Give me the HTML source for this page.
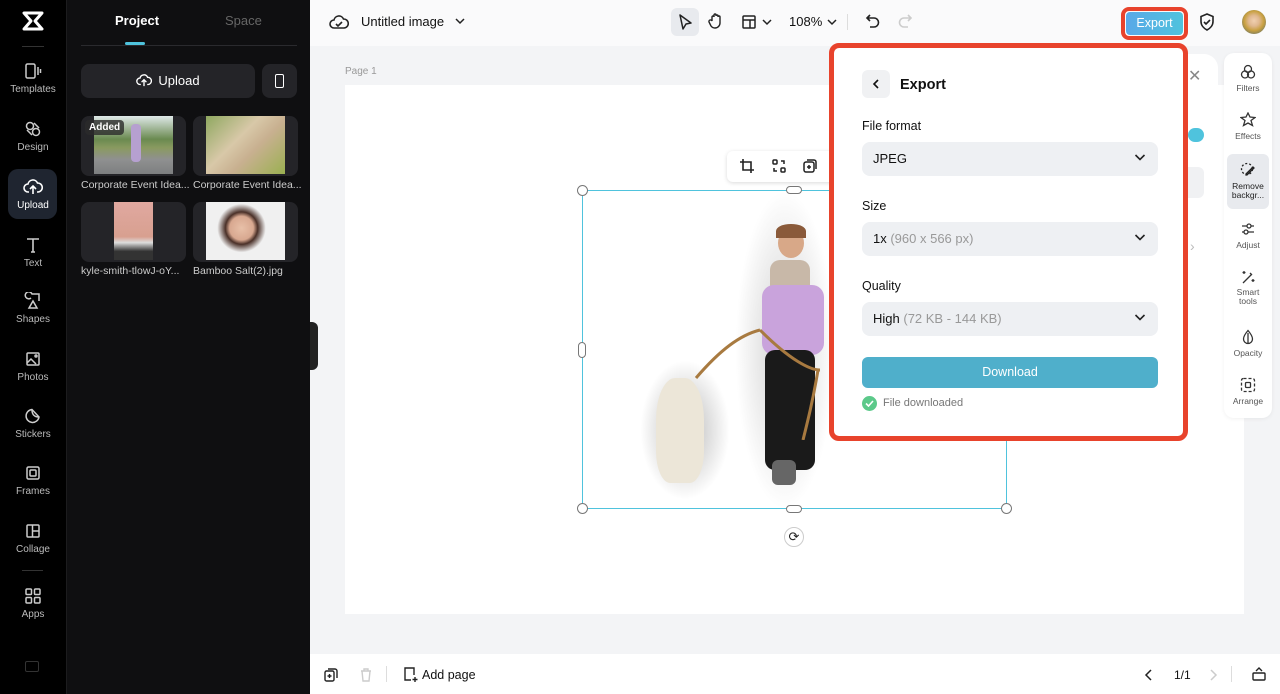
<!DOCTYPE html>
<html><head><meta charset="utf-8"><style>
*{box-sizing:border-box;margin:0;padding:0}
body{width:1280px;height:694px;overflow:hidden;font-family:"Liberation Sans",sans-serif;background:#f3f4f6;position:relative}
.abs{position:absolute}
.rail{left:0;top:0;width:66px;height:694px;background:#000}
.ri{position:absolute;left:0;width:66px;text-align:center;color:#bbb;font-size:10px}
.ri svg{display:block;margin:0 auto 4px}
.panel{left:66px;top:0;width:244px;height:694px;background:#0f0f11;border-left:1px solid #1c1c1e}
.thumb{position:absolute;width:105px;height:60px;background:#242428;border-radius:8px;overflow:hidden}
.cap{position:absolute;color:#ccc;font-size:10.5px;white-space:nowrap}
.top{left:310px;top:0;width:970px;height:46px;background:#fafafb}
.bot{left:310px;top:654px;width:970px;height:40px;background:#fff}
.sel{border-radius:8px;background:#eef0f3;height:34px;left:28px;width:296px;font-size:13px;color:#111;padding:9px 11px}
.sel .ch{position:absolute;right:12px;top:10px}
.lbl{font-size:12.5px;color:#111;left:28px}
</style></head><body>
<div class="abs rail">
<svg class="abs" style="left:21px;top:11px" width="24" height="20" viewBox="0 0 24 20"><path d="M3 2h18l-7 8 7 8H3l7-8z" fill="none" stroke="#fff" stroke-width="3" stroke-linejoin="round"/></svg>
<div class="abs" style="left:22px;top:46px;width:22px;height:1px;background:#333"></div>
<div class="ri" style="top:62px"><svg width="18" height="18" viewBox="0 0 18 18" fill="none" stroke="#ccc" stroke-width="1.5"><rect x="2" y="2" width="9" height="14" rx="1.5"/><path d="M14 5v8M16.5 7v4"/></svg>Templates</div>
<div class="ri" style="top:120px"><svg width="18" height="18" viewBox="0 0 18 18" fill="none" stroke="#ccc" stroke-width="1.5"><circle cx="6" cy="6" r="3.5"/><circle cx="12" cy="12" r="3.5"/><path d="M10 3l5 5M3 10l5 5"/></svg>Design</div>
<div class="abs" style="left:8px;top:169px;width:49px;height:50px;background:#1f2530;border-radius:10px"></div>
<div class="ri" style="top:178px;color:#fff"><svg width="20" height="18" viewBox="0 0 20 18" fill="none" stroke="#fff" stroke-width="1.6"><path d="M6 14H5a4 4 0 010-8 5 5 0 019.5-1A4 4 0 0115 14h-1M10 16V9M7 11l3-3 3 3"/></svg>Upload</div>
<div class="ri" style="top:236px"><svg width="18" height="18" viewBox="0 0 18 18" fill="none" stroke="#ccc" stroke-width="1.6"><path d="M3 3h12M9 3v13M7 16h4"/></svg>Text</div>
<div class="ri" style="top:292px"><svg width="18" height="18" viewBox="0 0 18 18" fill="none" stroke="#ccc" stroke-width="1.5"><path d="M7 6A3.5 3.5 0 118 2h7v7M9 9l-4 7h8z"/></svg>Shapes</div>
<div class="ri" style="top:350px"><svg width="18" height="18" viewBox="0 0 18 18" fill="none" stroke="#ccc" stroke-width="1.5"><rect x="3" y="3" width="12" height="12" rx="1"/><path d="M3 13l4-4 5 5"/><circle cx="12" cy="6" r="1"/></svg>Photos</div>
<div class="ri" style="top:407px"><svg width="18" height="18" viewBox="0 0 18 18" fill="none" stroke="#ccc" stroke-width="1.5"><path d="M15 10A6.5 6.5 0 118 2.5L15 10zM8 3c0 4 2 7 7 7"/></svg>Stickers</div>
<div class="ri" style="top:464px"><svg width="18" height="18" viewBox="0 0 18 18" fill="none" stroke="#ccc" stroke-width="1.5"><rect x="3" y="3" width="12" height="12" rx="1.5"/><rect x="6" y="6" width="6" height="6" rx="1"/></svg>Frames</div>
<div class="ri" style="top:522px"><svg width="18" height="18" viewBox="0 0 18 18" fill="none" stroke="#ccc" stroke-width="1.5"><rect x="3" y="3" width="12" height="12" rx="1"/><path d="M8.5 3v12M8.5 9H15"/></svg>Collage</div>
<div class="abs" style="left:22px;top:570px;width:21px;height:1px;background:#333"></div>
<div class="ri" style="top:587px"><svg width="18" height="18" viewBox="0 0 18 18" fill="none" stroke="#ccc" stroke-width="1.5"><rect x="2" y="2" width="5.5" height="5.5" rx="1"/><rect x="10.5" y="2" width="5.5" height="5.5" rx="1"/><rect x="2" y="10.5" width="5.5" height="5.5" rx="1"/><rect x="10.5" y="10.5" width="5.5" height="5.5" rx="1"/></svg>Apps</div>
<div class="abs" style="left:25px;top:661px;width:14px;height:11px;border:1px solid #333;border-radius:2px"></div>
</div>
<div class="abs panel">
<div class="abs" style="left:48px;top:13px;color:#fff;font-weight:bold;font-size:13px">Project</div>
<div class="abs" style="left:158px;top:13px;color:#666;font-size:13px">Space</div>
<div class="abs" style="left:14px;top:45px;width:216px;height:1px;background:#2a2a2e"></div>
<div class="abs" style="left:58px;top:42px;width:20px;height:3px;background:#4fc3dd;border-radius:2px"></div>
<div class="abs" style="left:14px;top:64px;width:174px;height:34px;background:#242428;border-radius:8px;color:#fff;font-size:13px;text-align:center;line-height:34px"><svg style="vertical-align:-3px;margin-right:6px" width="16" height="15" viewBox="0 0 20 18" fill="none" stroke="#fff" stroke-width="1.7"><path d="M6 14H5a4 4 0 010-8 5 5 0 019.5-1A4 4 0 0115 14h-1M10 16V9M7 11l3-3 3 3"/></svg>Upload</div>
<div class="abs" style="left:195px;top:64px;width:35px;height:34px;background:#242428;border-radius:8px"><div class="abs" style="left:13px;top:10px;width:9px;height:14px;border:1.5px solid #fff;border-radius:2px"></div></div>
<div class="thumb" style="left:14px;top:116px"><div class="abs" style="left:13px;top:0;width:79px;height:58px;background:linear-gradient(#dfe8e8 0,#6a8a50 40%,#8a9a60 55%,#8f9090 75%,#7d7f80)"></div><div class="abs" style="left:50px;top:8px;width:10px;height:38px;background:#b6a0d0;border-radius:4px"></div><div class="abs" style="left:4px;top:4px;background:#2a2a2acc;color:#fff;font-size:10px;padding:2px 4px;border-radius:4px;font-weight:bold">Added</div></div>
<div class="thumb" style="left:126px;top:116px"><div class="abs" style="left:13px;top:0;width:79px;height:58px;background:linear-gradient(135deg,#8fa860,#d8c8a8 40%,#c8b090 60%,#9ab050)"></div></div>
<div class="cap" style="left:14px;top:179px">Corporate Event Idea...</div>
<div class="cap" style="left:126px;top:179px">Corporate Event Idea...</div>
<div class="thumb" style="left:14px;top:202px"><div class="abs" style="left:33px;top:0;width:39px;height:58px;background:linear-gradient(#e0a8a0,#d8a090 60%,#ddd 70%,#333 85%)"></div></div>
<div class="thumb" style="left:126px;top:202px"><div class="abs" style="left:13px;top:0;width:79px;height:58px;background:radial-gradient(circle at 45% 45%,#e8c0a8 0,#d8a890 22%,#4a3028 30%,#f0f0f0 45%)"></div></div>
<div class="cap" style="left:14px;top:265px">kyle-smith-tlowJ-oY...</div>
<div class="cap" style="left:126px;top:265px">Bamboo Salt(2).jpg</div>
</div>
<div class="abs" style="left:310px;top:322px;width:8px;height:48px;background:#222;border-radius:0 6px 6px 0"></div>
<div class="abs top">
<svg class="abs" style="left:19px;top:13px" width="20" height="18" viewBox="0 0 20 18" fill="none" stroke="#222" stroke-width="1.6"><path d="M5 15a4 4 0 010-8 5 5 0 019.5-1A4.5 4.5 0 0115 15z"/><path d="M7 11l2 2 4-4"/></svg>
<div class="abs" style="left:51px;top:14px;font-size:13px;color:#111">Untitled image</div>
<svg class="abs" style="left:145px;top:17px" width="10" height="8" viewBox="0 0 10 8"><path d="M1 2l4 4 4-4" fill="none" stroke="#222" stroke-width="1.5"/></svg>
<div class="abs" style="left:361px;top:8px;width:28px;height:28px;background:#e8eaee;border-radius:6px"></div>
<svg class="abs" style="left:367px;top:13px" width="16" height="18" viewBox="0 0 16 18"><path d="M3 2l11 8-5 1-3 5z" fill="none" stroke="#222" stroke-width="1.5" stroke-linejoin="round"/></svg>
<svg class="abs" style="left:398px;top:12px" width="16" height="18" viewBox="0 0 16 18" fill="none" stroke="#222" stroke-width="1.4"><path d="M4 9V5a1 1 0 012 0V3a1 1 0 012 0v1a1 1 0 012 0v1a1 1 0 012 0v6a5 5 0 01-5 5 5 5 0 01-4-2L1 10a1 1 0 013-1z"/></svg>
<svg class="abs" style="left:431px;top:14px" width="16" height="16" viewBox="0 0 16 16" fill="none" stroke="#222" stroke-width="1.5"><rect x="2" y="2" width="12" height="12" rx="1"/><path d="M2 6h12M9 6v8"/></svg>
<svg class="abs" style="left:452px;top:18px" width="10" height="8" viewBox="0 0 10 8"><path d="M1 2l4 4 4-4" fill="none" stroke="#222" stroke-width="1.5"/></svg>
<div class="abs" style="left:479px;top:14px;font-size:13px;color:#111">108%</div>
<svg class="abs" style="left:517px;top:18px" width="10" height="8" viewBox="0 0 10 8"><path d="M1 2l4 4 4-4" fill="none" stroke="#222" stroke-width="1.5"/></svg>
<div class="abs" style="left:537px;top:14px;width:1px;height:16px;background:#ddd"></div>
<svg class="abs" style="left:555px;top:13px" width="16" height="16" viewBox="0 0 16 16" fill="none" stroke="#222" stroke-width="1.6"><path d="M5 2L2 5l3 3M2 5h7a4.5 4.5 0 010 9H5"/></svg>
<svg class="abs" style="left:587px;top:13px" width="16" height="16" viewBox="0 0 16 16" fill="none" stroke="#ccc" stroke-width="1.6"><path d="M11 2l3 3-3 3M14 5H7a4.5 4.5 0 000 9h4"/></svg>
<div class="abs" style="left:811px;top:7px;width:67px;height:33px;border:4px solid #e8432c;border-radius:8px"></div>
<div class="abs" style="left:816px;top:12px;width:57px;height:23px;background:linear-gradient(90deg,#5aa8e8,#4fc3dd);border-radius:4px;color:#fff;font-size:12.5px;text-align:center;line-height:23px">Export</div>
<svg class="abs" style="left:888px;top:12px" width="18" height="20" viewBox="0 0 18 20" fill="none" stroke="#222" stroke-width="1.6"><path d="M9 2l6 2.5v5c0 4-3 7-6 8.5-3-1.5-6-4.5-6-8.5v-5z"/><path d="M6 10l2 2 4-4"/></svg>
<div class="abs" style="left:932px;top:10px;width:24px;height:24px;border-radius:50%;background:radial-gradient(circle at 50% 45%,#f0d0b0 0,#e0b890 30%,#c8a040 55%,#3a6080)"></div>
</div>
<div class="abs" style="left:345px;top:66px;font-size:10px;color:#999">Page 1</div>
<div class="abs" style="left:345px;top:85px;width:899px;height:529px;background:#fff"></div>
<div class="abs" style="left:640px;top:360px;width:90px;height:140px;border-radius:45%;background:radial-gradient(ellipse,#ccc 20%,#fff 70%)"></div>
<div class="abs" style="left:735px;top:190px;width:100px;height:320px;border-radius:45%;background:radial-gradient(ellipse,#ddd 20%,#fff 70%)"></div>
<div class="abs" style="left:656px;top:378px;width:48px;height:105px;border-radius:40% 40% 30% 30%;background:#ece6d8"></div>
<div class="abs" style="left:778px;top:228px;width:26px;height:30px;border-radius:50%;background:#d8a888"></div>
<div class="abs" style="left:776px;top:224px;width:30px;height:14px;border-radius:50% 50% 0 0;background:#8a5a3a"></div>
<div class="abs" style="left:770px;top:260px;width:40px;height:35px;border-radius:10px;background:#c8b8a8"></div>
<div class="abs" style="left:762px;top:285px;width:62px;height:70px;border-radius:12px;background:#c9a3dc"></div>
<div class="abs" style="left:765px;top:350px;width:50px;height:120px;border-radius:10px;background:#1a1a1a"></div>
<div class="abs" style="left:772px;top:460px;width:24px;height:25px;border-radius:6px;background:#666"></div>
<svg class="abs" style="left:690px;top:310px" width="140" height="130"><path d="M6 68C30 40 50 25 70 20M70 20c30 30 50 40 60 40M128 60c-5 30-10 50-15 70" fill="none" stroke="#a87a40" stroke-width="3"/></svg>
<div class="abs" style="left:582px;top:190px;width:425px;height:319px;border:1.5px solid #4fc3dd"></div>
<div class="abs" style="left:577px;top:185px;width:11px;height:11px;border-radius:50%;background:#fff;border:1px solid #777"></div>
<div class="abs" style="left:577px;top:503px;width:11px;height:11px;border-radius:50%;background:#fff;border:1px solid #777"></div>
<div class="abs" style="left:1001px;top:503px;width:11px;height:11px;border-radius:50%;background:#fff;border:1px solid #777"></div>
<div class="abs" style="left:786px;top:186px;width:16px;height:8px;border-radius:4px;background:#fff;border:1px solid #777"></div>
<div class="abs" style="left:786px;top:505px;width:16px;height:8px;border-radius:4px;background:#fff;border:1px solid #777"></div>
<div class="abs" style="left:578px;top:342px;width:8px;height:16px;border-radius:4px;background:#fff;border:1px solid #777"></div>
<div class="abs" style="left:784px;top:527px;width:20px;height:20px;border-radius:50%;background:#fff;border:1px solid #ccc;text-align:center;font-size:13px;line-height:18px;color:#222">⟳</div>
<div class="abs" style="left:727px;top:151px;width:110px;height:31px;background:#fff;border-radius:6px;box-shadow:0 1px 4px rgba(0,0,0,.15)">
<svg class="abs" style="left:12px;top:7px" width="16" height="16" viewBox="0 0 16 16" fill="none" stroke="#222" stroke-width="1.6"><path d="M4 1v11h11M1 4h11v11"/></svg>
<svg class="abs" style="left:44px;top:7px" width="16" height="16" viewBox="0 0 16 16" fill="none" stroke="#222" stroke-width="1.5"><rect x="2" y="2" width="4" height="4" rx="1"/><rect x="10" y="10" width="4" height="4" rx="1"/><path d="M10 3h3v3M6 13H3v-3"/></svg>
<svg class="abs" style="left:75px;top:7px" width="16" height="16" viewBox="0 0 16 16" fill="none" stroke="#222" stroke-width="1.5"><rect x="2" y="4" width="10" height="10" rx="2"/><path d="M5 2h7a2 2 0 012 2v7M7 7v4M5 9h4"/></svg>
</div>
<div class="abs" style="left:1170px;top:54px;width:48px;height:228px;background:#fff;border-radius:0 14px 14px 0"></div>
<div class="abs" style="left:1188px;top:66px;font-size:16px;color:#888">✕</div>
<div class="abs" style="left:1188px;top:128px;width:16px;height:14px;border-radius:7px;background:#4fc3dd"></div>
<div class="abs" style="left:1180px;top:167px;width:24px;height:31px;background:#f0f1f3;border-radius:6px"></div>
<div class="abs" style="left:1190px;top:238px;color:#bbb;font-size:14px">›</div>
<div class="abs" style="left:1224px;top:53px;width:48px;height:365px;background:#fff;border-radius:10px;box-shadow:0 1px 4px rgba(0,0,0,.06)"></div>
<div class="abs" style="left:1227px;top:154px;width:42px;height:55px;background:#e8eaee;border-radius:6px"></div>
<div class="abs" style="left:1224px;top:64px;width:48px;text-align:center;font-size:8.5px;color:#555">
<svg width="16" height="16" viewBox="0 0 16 16" fill="none" stroke="#333" stroke-width="1.3" style="display:block;margin:0 auto 3px"><circle cx="8" cy="5" r="3.5"/><circle cx="5" cy="10.5" r="3.5"/><circle cx="11" cy="10.5" r="3.5"/></svg>Filters</div>
<div class="abs" style="left:1224px;top:112px;width:48px;text-align:center;font-size:8.5px;color:#555">
<svg width="16" height="16" viewBox="0 0 16 16" fill="none" stroke="#333" stroke-width="1.3" style="display:block;margin:0 auto 3px"><path d="M8 1l2 4 5 .5-4 3 1.5 5L8 11l-4.5 2.5L5 8.5l-4-3L6 5z"/></svg>Effects</div>
<div class="abs" style="left:1224px;top:162px;width:48px;text-align:center;font-size:8.5px;color:#222;line-height:9px">
<svg width="16" height="16" viewBox="0 0 16 16" fill="none" stroke="#222" stroke-width="1.3" style="display:block;margin:0 auto 4px"><circle cx="7" cy="7" r="5.5" stroke-dasharray="2 2"/><path d="M6 12l7-7 1 1-7 7H6z"/></svg>Remove<br>backgr...</div>
<div class="abs" style="left:1224px;top:221px;width:48px;text-align:center;font-size:8.5px;color:#555">
<svg width="16" height="16" viewBox="0 0 16 16" fill="none" stroke="#333" stroke-width="1.3" style="display:block;margin:0 auto 3px"><path d="M2 5h12M2 11h12"/><circle cx="9" cy="5" r="2" fill="#fff"/><circle cx="6" cy="11" r="2" fill="#fff"/></svg>Adjust</div>
<div class="abs" style="left:1224px;top:269px;width:48px;text-align:center;font-size:8.5px;color:#555;line-height:9px">
<svg width="16" height="16" viewBox="0 0 16 16" fill="none" stroke="#333" stroke-width="1.3" style="display:block;margin:0 auto 3px"><path d="M3 14L12 5M10 4l2 2M4 2v3M2.5 3.5h3M13 10v3M11.5 11.5h3"/></svg>Smart<br>tools</div>
<div class="abs" style="left:1224px;top:329px;width:48px;text-align:center;font-size:8.5px;color:#555">
<svg width="16" height="16" viewBox="0 0 16 16" fill="none" stroke="#333" stroke-width="1.3" style="display:block;margin:0 auto 3px"><path d="M8 1.5C5 5 3.5 7.5 3.5 10a4.5 4.5 0 009 0c0-2.5-1.5-5-4.5-8.5zM8 14.5V4"/></svg>Opacity</div>
<div class="abs" style="left:1224px;top:377px;width:48px;text-align:center;font-size:8.5px;color:#555">
<svg width="16" height="16" viewBox="0 0 16 16" fill="none" stroke="#333" stroke-width="1.3" style="display:block;margin:0 auto 3px"><rect x="1.5" y="1.5" width="13" height="13" rx="2" stroke-dasharray="3 2"/><rect x="5.5" y="5.5" width="5" height="5" rx="1"/></svg>Arrange</div>
<div class="abs" style="left:829px;top:43px;width:359px;height:398px;border:5px solid #e8432c;border-radius:10px;background:#fff">
<div class="abs" style="left:28px;top:22px;width:28px;height:28px;background:#f0f1f3;border-radius:6px"><svg class="abs" style="left:9px;top:8px" width="10" height="12" viewBox="0 0 10 12"><path d="M7 2L3 6l4 4" fill="none" stroke="#111" stroke-width="1.6"/></svg></div>
<div class="abs" style="left:66px;top:29px;font-size:14.5px;font-weight:bold;color:#111">Export</div>
<div class="abs lbl" style="top:71px">File format</div>
<div class="abs sel" style="top:94px">JPEG<svg class="ch" width="12" height="10" viewBox="0 0 12 10"><path d="M1.5 3l4.5 4.5L10.5 3" fill="none" stroke="#222" stroke-width="1.6"/></svg></div>
<div class="abs lbl" style="top:151px">Size</div>
<div class="abs sel" style="top:174px">1x <span style="color:#999">(960 x 566 px)</span><svg class="ch" width="12" height="10" viewBox="0 0 12 10"><path d="M1.5 3l4.5 4.5L10.5 3" fill="none" stroke="#222" stroke-width="1.6"/></svg></div>
<div class="abs lbl" style="top:231px">Quality</div>
<div class="abs sel" style="top:254px">High <span style="color:#999">(72 KB - 144 KB)</span><svg class="ch" width="12" height="10" viewBox="0 0 12 10"><path d="M1.5 3l4.5 4.5L10.5 3" fill="none" stroke="#222" stroke-width="1.6"/></svg></div>
<div class="abs" style="left:28px;top:309px;width:296px;height:31px;background:#4fafcb;border-radius:6px;color:#fff;font-size:12.5px;text-align:center;line-height:31px">Download</div>
<div class="abs" style="left:28px;top:348px;width:15px;height:15px;border-radius:50%;background:#5cc98a"><svg class="abs" style="left:3px;top:4px" width="9" height="7" viewBox="0 0 9 7"><path d="M1 3.5l2.5 2.5L8 1" fill="none" stroke="#fff" stroke-width="1.6"/></svg></div>
<div class="abs" style="left:49px;top:349px;font-size:11px;color:#777">File downloaded</div>
</div>
<div class="abs bot">
<svg class="abs" style="left:14px;top:14px" width="14" height="14" viewBox="0 0 14 14" fill="none" stroke="#222" stroke-width="1.4"><rect x="1" y="3" width="9" height="10" rx="1.5"/><path d="M4 1h7a2 2 0 012 2v7M5.5 6v4M3.5 8h4"/></svg>
<svg class="abs" style="left:49px;top:14px" width="14" height="14" viewBox="0 0 14 14" fill="none" stroke="#ccc" stroke-width="1.4"><path d="M2 3h10M5 3V1h4v2M3 3l1 10h6l1-10"/></svg>
<div class="abs" style="left:76px;top:12px;width:1px;height:16px;background:#ddd"></div>
<svg class="abs" style="left:93px;top:13px" width="16" height="16" viewBox="0 0 16 16" fill="none" stroke="#222" stroke-width="1.4"><path d="M8 13H2V1h9v7M12 10v5M9.5 12.5h5"/></svg>
<div class="abs" style="left:112px;top:14px;font-size:12.5px;color:#111">Add page</div>
<svg class="abs" style="left:834px;top:14px" width="10" height="14" viewBox="0 0 10 14"><path d="M7 2L2 7l5 5" fill="none" stroke="#222" stroke-width="1.5"/></svg>
<div class="abs" style="left:864px;top:14px;font-size:12px;color:#111">1/1</div>
<svg class="abs" style="left:898px;top:14px" width="10" height="14" viewBox="0 0 10 14"><path d="M3 2l5 5-5 5" fill="none" stroke="#ccc" stroke-width="1.5"/></svg>
<div class="abs" style="left:921px;top:12px;width:1px;height:16px;background:#ddd"></div>
<svg class="abs" style="left:941px;top:12px" width="16" height="16" viewBox="0 0 16 16" fill="none" stroke="#222" stroke-width="1.4"><rect x="2" y="7" width="12" height="7" rx="1"/><path d="M5 5l3-3 3 3"/></svg>
</div>
</body></html>
